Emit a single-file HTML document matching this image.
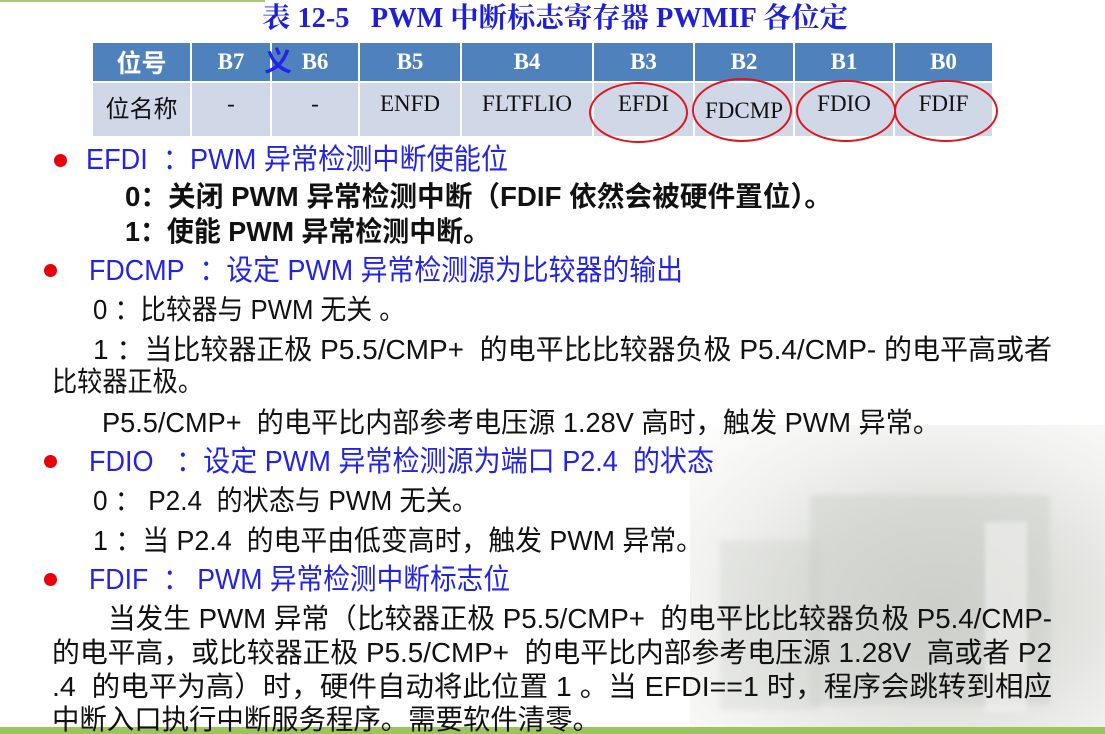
<!DOCTYPE html>
<html><head><meta charset="utf-8">
<style>
html,body{margin:0;padding:0;width:1105px;height:734px;overflow:hidden;background:#fff;}
body{position:relative;font-family:"Liberation Sans","Noto Sans CJK SC",sans-serif;}
.l{position:absolute;white-space:nowrap;transform-origin:0 0;line-height:1;}
.b{color:#2323e6;font-size:29px;}
.k{color:#111;font-size:28px;}
.dot{position:absolute;width:13px;height:13px;border-radius:50%;background:#e8000b;}
table{position:absolute;left:91px;top:41px;border-collapse:collapse;font-family:"Liberation Serif","Noto Serif CJK SC",serif;table-layout:fixed;}
td{padding:0;text-align:center;border:2px solid #fff;overflow:hidden;}
tr.h td{background:#4f81bd;color:#fff;font-weight:bold;font-size:23px;height:38px;}
tr.d td{background:#d0d8e8;color:#111;font-size:23px;height:53px;}
.c{position:absolute;border:2px solid #e0141e;border-radius:50%;}
.bg{position:absolute;left:690px;top:425px;width:415px;height:302px;
background:radial-gradient(ellipse at 60% 60%,#d2d4cf 0%,#dfe0dc 35%,#f0f1ee 65%,#fff 100%);}
.bld{position:absolute;background:#c4c7c1;opacity:.35;filter:blur(3px)}
</style></head><body>
<div style="position:absolute;left:0;top:0;width:265px;height:2px;background:#a8c97a"></div>
<div class="bg"></div>
<div class="bld" style="left:810px;top:495px;width:240px;height:210px;"></div>
<div class="bld" style="left:720px;top:540px;width:100px;height:170px;opacity:.25"></div>
<div style="position:absolute;left:985px;top:522px;width:42px;height:190px;background:#f2f2f0;opacity:.6;filter:blur(2px)"></div>
<div style="position:absolute;left:0;top:727px;width:1105px;height:7px;background:#9bc45c"></div>

<div class="l" id="t0" style="left:262px;top:5px;font-family:'Liberation Serif','Noto Serif CJK SC',serif;font-weight:bold;font-size:28px;color:#1f1fd8">表 12-5&nbsp;&nbsp; PWM 中断标志寄存器 PWMIF 各位定</div>

<table>
<tr class="h"><td style="width:97px;font-family:'Liberation Sans','Noto Sans CJK SC',sans-serif;font-size:25px">位号</td><td style="width:78px">B7</td><td style="width:86px">B6</td><td style="width:100px">B5</td><td style="width:130px">B4</td><td style="width:99px">B3</td><td style="width:98px">B2</td><td style="width:98px">B1</td><td style="width:97px">B0</td></tr>
<tr class="d"><td style="font-family:'Liberation Sans','Noto Sans CJK SC',sans-serif;font-size:24px;vertical-align:top;padding-top:6px;height:47px">位名称</td><td style="vertical-align:top;padding-top:8px;height:45px">-</td><td style="vertical-align:top;padding-top:8px;height:45px">-</td><td style="vertical-align:top;padding-top:8px;height:45px">ENFD</td><td style="vertical-align:top;padding-top:8px;height:45px">FLTFLIO</td><td style="vertical-align:top;padding-top:8px;height:45px">EFDI</td><td style="vertical-align:top;padding-top:15px;height:38px">FDCMP</td><td style="vertical-align:top;padding-top:8px;height:45px">FDIO</td><td style="vertical-align:top;padding-top:8px;height:45px">FDIF</td></tr>
</table>
<div class="l" style="left:264px;top:46px;font-size:28px;color:#2323e6;font-family:'Noto Sans CJK SC',sans-serif;font-weight:bold">义</div>
<div class="c" style="left:589px;top:82px;width:95px;height:57px"></div>
<div class="c" style="left:692px;top:78px;width:96px;height:60px"></div>
<div class="c" style="left:796px;top:80px;width:96px;height:58px"></div>
<div class="c" style="left:894px;top:80px;width:100px;height:58px"></div>

<div class="dot" style="left:54px;top:154px"></div>
<div class="dot" style="left:44px;top:264px"></div>
<div class="dot" style="left:44px;top:455px"></div>
<div class="dot" style="left:44px;top:573px"></div>

<div class="l b" id="a1" style="left:86px;top:146px">EFDI&nbsp; ：PWM 异常检测中断使能位</div>
<div class="l k" id="a2" style="left:125px;top:183px;font-weight:bold">0：关闭 PWM 异常检测中断（FDIF 依然会被硬件置位）。</div>
<div class="l k" id="a3" style="left:125px;top:218px;font-weight:bold">1：使能 PWM 异常检测中断。</div>
<div class="l b" id="a4" style="left:89px;top:257px">FDCMP&nbsp; ：设定 PWM 异常检测源为比较器的输出</div>
<div class="l k" id="a5" style="left:93px;top:296px">0 ：比较器与 PWM 无关 。</div>
<div class="l k" id="a6" style="left:93px;top:336px">1 ：当比较器正极 P5.5/CMP+&nbsp; 的电平比比较器负极 P5.4/CMP- 的电平高或者</div>
<div class="l k" id="a7" style="left:52px;top:368px">比较器正极。</div>
<div class="l k" id="a8" style="left:102px;top:409px">P5.5/CMP+&nbsp; 的电平比内部参考电压源 1.28V 高时，触发 PWM 异常。</div>
<div class="l b" id="a9" style="left:89px;top:448px">FDIO&nbsp;&nbsp; ：设定 PWM 异常检测源为端口 P2.4&nbsp; 的状态</div>
<div class="l k" id="a10" style="left:93px;top:487px">0 ：&nbsp;P2.4&nbsp; 的状态与 PWM 无关。</div>
<div class="l k" id="a11" style="left:93px;top:527px">1 ：当 P2.4&nbsp; 的电平由低变高时，触发 PWM 异常。</div>
<div class="l b" id="a12" style="left:89px;top:566px">FDIF&nbsp; ： PWM 异常检测中断标志位</div>
<div class="l k" id="a13" style="left:108px;top:605px">当发生 PWM 异常（比较器正极 P5.5/CMP+&nbsp; 的电平比比较器负极 P5.4/CMP-</div>
<div class="l k" id="a14" style="left:52px;top:639px">的电平高，或比较器正极 P5.5/CMP+&nbsp; 的电平比内部参考电压源 1.28V&nbsp; 高或者 P2</div>
<div class="l k" id="a15" style="left:52px;top:673px">.4&nbsp; 的电平为高）时，硬件自动将此位置 1 。当 EFDI==1 时，程序会跳转到相应</div>
<div class="l k" id="a16" style="left:52px;top:706px">中断入口执行中断服务程序。需要软件清零。</div>
<script>
var W={t0:586,a1:422,a2:707,a3:365,a4:594,a5:312,a6:959,a7:151,a8:838,a9:625,a10:385,a11:610,a12:421,a13:944,a14:1000,a15:1000,a16:548};
for(var k in W){var e=document.getElementById(k);var w=e.getBoundingClientRect().width;if(w>0)e.style.transform='scaleX('+(W[k]/w)+')';}
</script>
</body></html>
